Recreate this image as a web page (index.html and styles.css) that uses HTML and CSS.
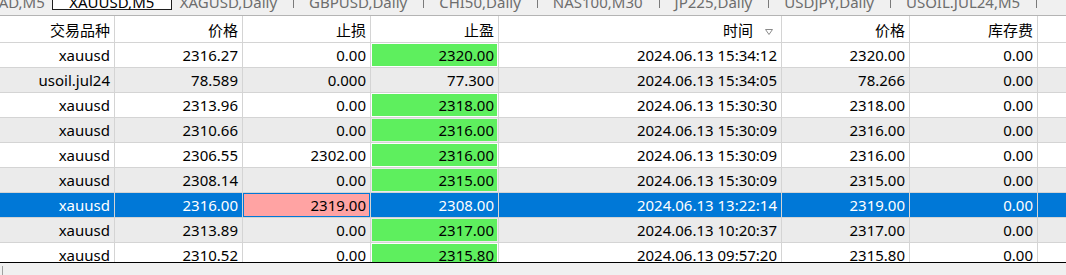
FILE: index.html
```html
<!DOCTYPE html>
<html lang="zh">
<head>
<meta charset="utf-8">
<title>Trade history</title>
<link rel="stylesheet" href="styles.css">
</head>
<body>
<div class="tabs">
  <div class="strip">
    <span class="tab first">USDCAD,M5</span>
    <span class="tab active">XAUUSD,M5</span>
    <span class="tab">XAGUSD,Daily</span><span class="sep"></span>
    <span class="tab">GBPUSD,Daily</span><span class="sep"></span>
    <span class="tab">CHI50,Daily</span><span class="sep"></span>
    <span class="tab">NAS100,M30</span><span class="sep"></span>
    <span class="tab">JP225,Daily</span><span class="sep"></span>
    <span class="tab">USDJPY,Daily</span><span class="sep"></span>
    <span class="tab">USOIL.JUL24,M5</span><span class="sep"></span>
  </div>
</div>
<div class="grid">
  <div class="row head">
    <div class="c">交易品种</div>
    <div class="c">价格</div>
    <div class="c">止损</div>
    <div class="c">止盈</div>
    <div class="c sorted">时间<svg class="arrow" width="8" height="6" viewBox="0 0 8 6"><path d="M0.5 0.5 H7.5 L4 5.5 Z" fill="none" stroke="#8a8a8a" stroke-width="1"/></svg></div>
    <div class="c">价格</div>
    <div class="c">库存费</div>
    <div class="c last"></div>
  </div>
  <div class="row">
    <div class="c">xauusd</div><div class="c">2316.27</div><div class="c">0.00</div><div class="c g">2320.00</div><div class="c">2024.06.13 15:34:12</div><div class="c">2320.00</div><div class="c">0.00</div><div class="c last"></div>
  </div>
  <div class="row alt">
    <div class="c">usoil.jul24</div><div class="c">78.589</div><div class="c">0.000</div><div class="c">77.300</div><div class="c">2024.06.13 15:34:05</div><div class="c">78.266</div><div class="c">0.00</div><div class="c last"></div>
  </div>
  <div class="row">
    <div class="c">xauusd</div><div class="c">2313.96</div><div class="c">0.00</div><div class="c g">2318.00</div><div class="c">2024.06.13 15:30:30</div><div class="c">2318.00</div><div class="c">0.00</div><div class="c last"></div>
  </div>
  <div class="row alt">
    <div class="c">xauusd</div><div class="c">2310.66</div><div class="c">0.00</div><div class="c g">2316.00</div><div class="c">2024.06.13 15:30:09</div><div class="c">2316.00</div><div class="c">0.00</div><div class="c last"></div>
  </div>
  <div class="row">
    <div class="c">xauusd</div><div class="c">2306.55</div><div class="c">2302.00</div><div class="c g">2316.00</div><div class="c">2024.06.13 15:30:09</div><div class="c">2316.00</div><div class="c">0.00</div><div class="c last"></div>
  </div>
  <div class="row alt">
    <div class="c">xauusd</div><div class="c">2308.14</div><div class="c">0.00</div><div class="c g">2315.00</div><div class="c">2024.06.13 15:30:09</div><div class="c">2315.00</div><div class="c">0.00</div><div class="c last"></div>
  </div>
  <div class="row sel">
    <div class="c">xauusd</div><div class="c">2316.00</div><div class="c p">2319.00</div><div class="c">2308.00</div><div class="c">2024.06.13 13:22:14</div><div class="c">2319.00</div><div class="c">0.00</div><div class="c last"></div>
  </div>
  <div class="row alt">
    <div class="c">xauusd</div><div class="c">2313.89</div><div class="c">0.00</div><div class="c g">2317.00</div><div class="c">2024.06.13 10:20:37</div><div class="c">2317.00</div><div class="c">0.00</div><div class="c last"></div>
  </div>
  <div class="row">
    <div class="c">xauusd</div><div class="c">2310.52</div><div class="c">0.00</div><div class="c g">2315.80</div><div class="c">2024.06.13 09:57:20</div><div class="c">2315.80</div><div class="c">0.00</div><div class="c last"></div>
  </div>
</div>
<div class="status"><span class="grip"></span></div>
</body>
</html>
```
FILE: styles.css
```css
* { box-sizing: border-box; }
html, body {
  margin: 0;
  padding: 0;
  width: 1066px;
  height: 275px;
  overflow: hidden;
  background: #f0f0f0;
  font-family: "Noto Sans", "Noto Sans CJK SC", sans-serif;
  font-size: 15px;
  color: #000;
}
.tabs {
  height: 16px;
  border-bottom: 1px solid #b4b4b4;
  overflow: hidden;
  background: #f0f0f0;
}
.strip {
  display: flex;
  align-items: flex-start;
  margin-top: -12px;
  margin-left: -56px;
  white-space: nowrap;
  font-size: 15px;
}
.tab {
  height: 22px;
  padding: 6px 15px 0 14px;
  line-height: 14px;
  color: #6d6d6d;
  border: 1px solid transparent;
}
.tab.first { padding-right: 6px; }
.tab.active {
  color: #000;
  background: #fff;
  border-color: #1e1e1e;
  min-width: 120px;
  text-align: center;
  padding: 6px 8px 0 8px;
  margin-right: -7px;
}
.sep {
  width: 1px;
  height: 20px;
  background: #7a7a7a;
  flex: none;
}
.grid {
  height: 246px;
  overflow: hidden;
  background: #fff;
}
.row {
  --bg: #fff;
  display: grid;
  grid-template-columns: 115px 128px 128px 128px 283px 128px 128px 1fr;
  height: 25px;
  border-bottom: 1px solid #d4d4d4;
  background: var(--bg);
}
.row.alt { --bg: #ebebeb; }
.row.sel { --bg: #0078d7; color: #fff; }
.row.head { height: 27px; }
.c {
  border-right: 1px solid #d4d4d4;
  text-align: right;
  padding: 0 4px 0 0;
  line-height: 24px;
  white-space: nowrap;
  overflow: hidden;
}
.head .c { line-height: 24px; padding-top: 2px; }
.c.last { border-right: none; }
.c.sorted { padding-right: 8px; }
.arrow { margin-left: 12px; vertical-align: 1px; }
.c.g {
  background: #5eef5e;
  box-shadow: inset 1px 1px 0 var(--bg), inset -1px -1px 0 var(--bg);
}
.c.p {
  background: #ffa3a3;
  color: #000;
  box-shadow: inset 1px 1px 0 var(--bg), inset -1px -1px 0 var(--bg);
}
.status {
  height: 13px;
  border-top: 1px solid #000;
  background: #f0f0f0;
  padding: 3px 0 0 2px;
}
.grip {
  display: block;
  width: 1px;
  height: 9px;
  background: #a0a0a0;
}
```
